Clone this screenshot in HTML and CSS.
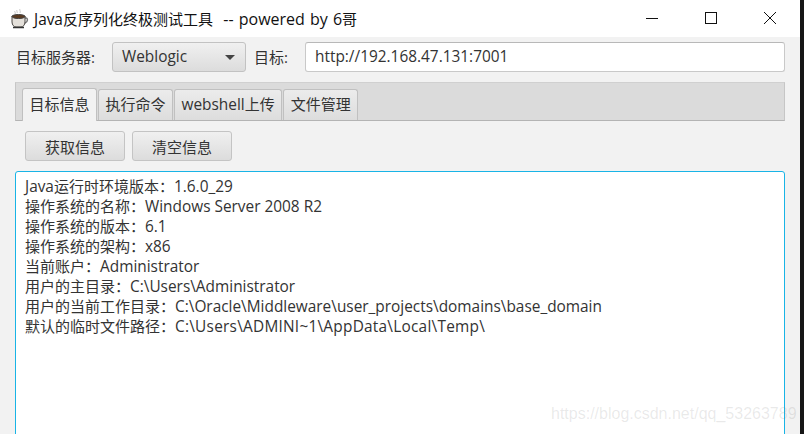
FILE: index.html
```html
<!DOCTYPE html>
<html>
<head>
  <meta charset="UTF-8">
  <title>Java反序列化终极测试工具</title>
  <link rel="stylesheet" href="styles.css">
</head>
<body>
  <div class="window">
    <!-- Title bar -->
    <header class="titlebar">
      <svg class="app-icon" width="20" height="20" viewBox="0 0 20 20">
        <path d="M8 1c-1 1 1 2 0 3M11 0c-1 1 1 2 0 4M6 2c-1 1 1 1 0 3" fill="none" stroke="#c8c8c8" stroke-width="1"/>
        <path d="M15 9h2c2 0 2 4-1 5h-2" fill="none" stroke="#777" stroke-width="1.5"/>
        <path d="M3 7h13v6c0 3-2 5-4 5H7c-2 0-4-2-4-5z" fill="#e4e0da" stroke="#4a4642"/>
        <ellipse cx="9.5" cy="7.5" rx="6.5" ry="2" fill="#5a3a20" stroke="#444"/>
        <path d="M4 18.500h11" stroke="#333" stroke-width="1.500"/>
      </svg>
      <span class="title"><span class="latin">Java</span>反序列化终极测试工具<span class="latin tagline">&nbsp; -- powered by 6</span>哥</span>
      <div class="window-controls">
        <svg width="14" height="14" viewBox="0 0 14 14"><path d="M1 7.500h12" stroke="#111"/></svg>
        <svg width="14" height="14" viewBox="0 0 14 14"><rect x="1.500" y="1.500" width="11" height="11" fill="none" stroke="#111"/></svg>
        <svg width="14" height="14" viewBox="0 0 14 14"><path d="M1 1l12 12M13 1L1 13" stroke="#111"/></svg>
      </div>
    </header>

    <main class="content">
      <div class="target-row">
        <label class="field-label server-label">目标服务器:</label>
        <div class="select">
          <span class="latin">Weblogic</span>
          <i class="select-arrow"></i>
        </div>
        <label class="field-label host-label">目标:</label>
        <div class="text-input latin">http://192.168.47.131:7001</div>
      </div>

      <!-- Tabs -->
      <div class="tab-header">
        <div class="tab active">目标信息</div>
        <div class="tab">执行命令</div>
        <div class="tab"><span class="latin">webshell</span>上传</div>
        <div class="tab">文件管理</div>
      </div>

      <div class="actions">
        <button class="btn">获取信息</button>
        <button class="btn">清空信息</button>
      </div>

      <div class="output">
        <div><span class="latin">Java</span>运行时环境版本：<span class="latin">1.6.0_29</span></div>
        <div>操作系统的名称：<span class="latin">Windows Server 2008 R2</span></div>
        <div>操作系统的版本：<span class="latin">6.1</span></div>
        <div>操作系统的架构：<span class="latin">x86</span></div>
        <div>当前账户：<span class="latin">Administrator</span></div>
        <div>用户的主目录：<span class="latin">C:\Users\Administrator</span></div>
        <div>用户的当前工作目录：<span class="latin">C:\Oracle\Middleware\user_projects\domains\base_domain</span></div>
        <div>默认的临时文件路径：<span class="latin temp-path">C:\Users\ADMINI~1\AppData\Local\Temp\</span></div>
      </div>
    </main>
    <div class="watermark">https://blog.csdn.net/qq_53263789</div>
  </div>
</body>
</html>
```

FILE: styles.css
```css
html, body {
  margin: 0;
  height: 100%;
  overflow: hidden;
  background-color: #161616;
}
body {
  font-family: "Open Sans", "Noto Sans CJK SC", sans-serif;
  font-size: 15px;
  color: #333;
}
/* Latin runs sit slightly larger than the CJK around them */
.latin {
  font-size: 15.4px;
  line-height: 1;
}
.tagline {
  font-size: 16px;
  word-spacing: 1px;
}
.temp-path {
  letter-spacing: 0.24px;
}
.window {
  position: relative;
  width: 800px;
  height: 434px;
  overflow: hidden;
  display: flex;
  flex-direction: column;
  background-color: #f2f2f2;
}
/* Title bar */
.titlebar {
  height: 37px;
  flex: none;
  display: flex;
  align-items: center;
  padding: 0 0 0 9px;
  background-color: #fff;
  box-sizing: border-box;
}
.app-icon {
  margin-right: 5px;
}
.title {
  color: #111;
  margin-top: -1px;
}
.window-controls {
  margin-left: auto;
  display: flex;
  gap: 45px;
  padding-right: 23px;
  margin-top: -1px;
}
.content {
  flex: 1;
  padding: 5px 15px 0;
  display: flex;
  flex-direction: column;
}
/* Target row */
.target-row {
  display: flex;
  align-items: center;
  height: 30px;
}
.field-label {
  box-sizing: border-box;
  margin-top: -1px;
}
.server-label {
  width: 97px;
  padding-left: 1px;
}
.host-label {
  width: 51px;
}
.select {
  width: 134px;
  height: 30px;
  box-sizing: border-box;
  margin-right: 8px;
  padding: 0 10px 0 9px;
  display: flex;
  align-items: center;
  justify-content: space-between;
  border: 1px solid #c2c2c2;
  border-radius: 3px;
  background: linear-gradient(#f0f0f0, #dcdcdc);
}
.select-arrow {
  width: 0;
  height: 0;
  border-left: 5px solid transparent;
  border-right: 5px solid transparent;
  border-top: 5px solid #444;
}
.text-input {
  flex: 1;
  height: 30px;
  box-sizing: border-box;
  padding: 0 9px;
  line-height: 28px;
  background-color: #fff;
  border: 1px solid #c9c9c9;
  border-top-color: #b8b8b8;
  border-radius: 3px;
}
/* Tabs */
.tab-header {
  height: 39px;
  flex: none;
  margin-top: 10px;
  box-sizing: border-box;
  padding: 7px 0 0 6px;
  display: flex;
  align-items: flex-end;
  gap: 1px;
  background-color: #dbdbdb;
  border-top: 1px solid #d0d0d0;
  border-left: 1px solid #c6c6c6;
  border-right: 1px solid #c6c6c6;
  border-bottom: 1px solid #b4b4b4;
}
.tab {
  height: 31px;
  box-sizing: border-box;
  padding: 0 6.5px;
  line-height: 29px;
  border: 1px solid #c0c0c0;
  border-bottom: none;
  border-radius: 3px 3px 0 0;
  background: linear-gradient(#ececec, #dddddd);
}
.tab.active {
  height: 33px;
  line-height: 31px;
  margin-bottom: -1px;
  background: #f2f2f2;
}
.actions {
  display: flex;
  gap: 7px;
  padding: 10px 0 10px 10px;
}
.btn {
  width: 100px;
  height: 30px;
  padding: 0;
  font-family: inherit;
  font-size: 15px;
  color: #333;
  border: 1px solid #c4c4c4;
  border-radius: 3px;
  background: linear-gradient(#f0f0f0, #dcdcdc);
}
/* Output area */
.output {
  flex: 1;
  box-sizing: border-box;
  margin-bottom: -6px;
  padding: 4px 9px;
  line-height: 20px;
  background-color: #fff;
  border: 1px solid #19b4e6;
  border-radius: 3px 3px 0 0;
}
.watermark {
  position: absolute;
  left: 551px;
  top: 405px;
  font-family: "Liberation Sans", sans-serif;
  font-size: 16px;
  color: rgba(120, 120, 120, 0.16);
  white-space: nowrap;
}
```
